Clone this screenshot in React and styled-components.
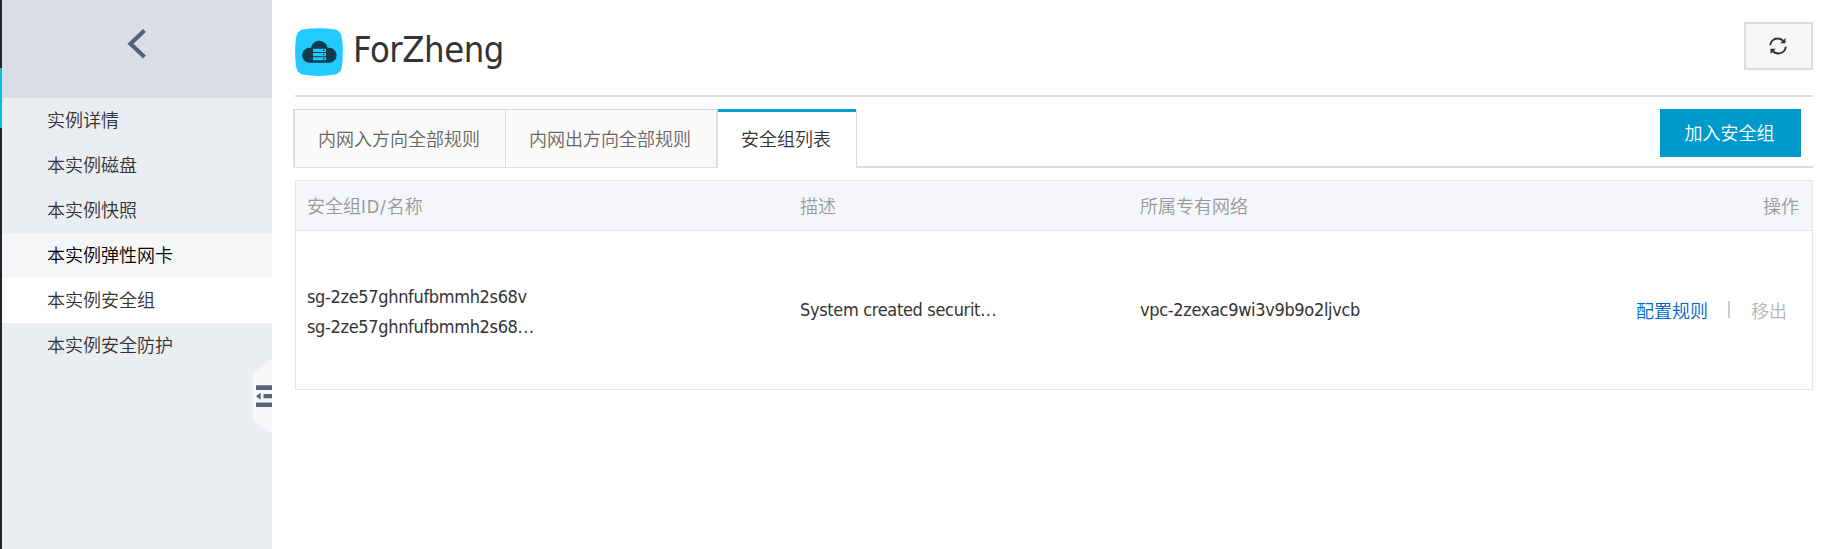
import React from "react";
import styled, { createGlobalStyle } from "styled-components";

const latin = `"DejaVu Sans Condensed", "DejaVu Sans", "Noto Sans CJK SC", sans-serif`;
const cjk = `"Noto Sans CJK SC", sans-serif`;

const GlobalStyle = createGlobalStyle`
  * { box-sizing: border-box; }
  body {
    margin: 0;
    background: #fff;
    color: #333;
    font-family: ${cjk};
    font-size: 18px;
    font-weight: 350;
    overflow: hidden;
  }
`;

const Page = styled.div`
  display: flex;
  height: 549px;
`;

const Rail = styled.div`
  width: 2px;
  padding-top: 68px;
  background: #20242d;
`;

const RailMarker = styled.div`
  height: 60px;
  background: #00c1de;
`;

const Sidebar = styled.aside`
  position: relative;
  width: 270px;
  background: #eaedf2;
`;

const BackBar = styled.div`
  display: flex;
  height: 98px;
  padding: 29px 0 0 125px;
  background: #d9dde4;
`;

const NavItem = styled.a`
  display: block;
  height: 45px;
  padding-left: 45px;
  line-height: 43px;
  color: ${(p) => (p.$hovered ? "#000" : "#333")};
  background: ${(p) => (p.$active ? "#fff" : p.$hovered ? "#f4f6f8" : "transparent")};
`;

const CollapseHandle = styled.div`
  position: absolute;
  right: 0;
  top: 359px;
  width: 19px;
  height: 75px;
  svg { display: block; }
`;

const Main = styled.main`
  flex: 1;
  padding: 0 15px 0 23px;
`;

const Header = styled.header`
  display: flex;
  align-items: flex-start;
  height: 97px;
  border-bottom: 2px solid #ddd;
`;

const Logo = styled.svg`
  margin-top: 28px;
`;

const Title = styled.h1`
  flex: 1;
  margin: 26px 0 0 10px;
  font: 400 36px/48px ${latin};
  font-stretch: condensed;
  letter-spacing: -0.4px;
`;

const RefreshButton = styled.button`
  display: flex;
  width: 69px;
  height: 48px;
  margin-top: 22px;
  padding: 13px 0 0 23px;
  border: 2px solid #ddd;
  background: #f7f7f7;
`;

const TabBar = styled.div`
  display: flex;
  height: 59px;
  margin: 12px 0 0 -2px;
`;

const Tab = styled.div`
  width: ${(p) => p.$width}px;
  height: 59px;
  padding-left: 23px;
  line-height: ${(p) => (p.$active ? 53 : 57)}px;
  color: ${(p) => (p.$active ? "#333" : "#666")};
  background: ${(p) => (p.$active ? "#fff" : "#fbfaf8")};
  border: 0 solid #ddd;
  border-top: ${(p) => (p.$active ? "3px solid #00a2ca" : "1px solid #ddd")};
  border-left-width: ${(p) => (p.$first ? 2 : 0)}px;
  border-right-width: ${(p) => p.$divider ?? 0}px;
  border-bottom-width: ${(p) => (p.$active ? 0 : 1)}px;
`;

const TabRest = styled.div`
  flex: 1;
  display: flex;
  justify-content: flex-end;
  padding-right: 12px;
  border-left: 1px solid #ddd;
  border-bottom: 2px solid #ddd;
`;

const JoinButton = styled.button`
  width: 141px;
  height: 48px;
  padding: 0 2px 2px 0;
  border: 0;
  background: #0099cc;
  color: #fff;
  font: 350 18px/46px ${cjk};
`;

const Table = styled.section`
  margin-top: 12px;
  height: 210px;
  border: 1px solid #e1e6eb;
`;

const Row = styled.div`
  display: grid;
  grid-template-columns: 493px 340px 1fr auto;
  align-items: center;
  padding: 0 12px 0 11px;
`;

const HeadRow = styled(Row)`
  height: 50px;
  padding-right: 13px;
  padding-bottom: 2px;
  border-bottom: 1px solid #e1e6eb;
  background: #f5f6fa;
  color: #999;
`;

const BodyRow = styled(Row)`
  height: 158px;
  padding-right: 25px;
`;

const Latin = styled.span`
  font-family: ${latin};
  font-stretch: condensed;
  font-weight: 400;
  letter-spacing: ${(p) => p.$tracking ?? -0.33}px;
`;

const Dots = styled.span`
  letter-spacing: 0.5px;
`;

const HeadCell = styled.div`
  height: 30px;
  line-height: 30px;
`;

const Cell = styled.div`
  line-height: 30px;
  padding-bottom: ${(p) => (p.$single ? 2 : 0)}px;
`;

const GroupId = styled.div`
  height: 30px;
`;

const Actions = styled.div`
  display: flex;
  align-items: center;
  line-height: 30px;
  padding-bottom: 1px;
`;

const ActionLink = styled.a`
  color: ${(p) => (p.$disabled ? "#b5b5b5" : "#0066cc")};
`;

const Separator = styled.span`
  width: 2px;
  height: 17px;
  margin: 0 21px 1px 20px;
  background: #ccc;
`;

const navItems = [
  { label: "实例详情" },
  { label: "本实例磁盘" },
  { label: "本实例快照" },
  { label: "本实例弹性网卡", hovered: true },
  { label: "本实例安全组", active: true },
  { label: "本实例安全防护" },
];

function CloudLogo() {
  return (
    <Logo width="48" height="48" viewBox="0 0 48 48">
      <path d="M9 1.2Q24-.9 39 1.2Q45.7 2.2 46.8 9Q49 24 46.8 39Q45.7 45.8 39 46.8Q24 49 9 46.8Q2.300 45.800 1.200 39Q-1 24 1.200 9Q2.300 2.200 9 1.200Z" fill="#23caff" />
      <path d="M14.500 34.700A7.400 7.400 0 0 1 14.500 19.800H16A8.400 8.400 0 0 1 32.600 19.800H34.200A7.400 7.400 0 0 1 34.200 34.700Z" fill="#0d3b4f" />
      <path d="M18 20.800h13v3.300H18zM18 25h13v3.300H18zM18 29.200h13v3H18z" fill="#23caff" />
      <path d="M28 21.500h1.400v1.400H28zM28 25.800h1.400v1.400H28zM28 30h1.400v1.400H28z" fill="#0d3b4f" />
    </Logo>
  );
}

function RefreshIcon() {
  return (
    <svg width="18" height="18" viewBox="0 0 18 18" fill="none" stroke="#333" strokeWidth="1.900">
      <path d="M1.200 8.200C1.500 4.200 4.700 1.500 8.600 1.500C11 1.500 13.200 2.600 14.500 4.300" />
      <path d="M16.800 9.800C16.500 13.800 13.300 16.500 9.400 16.500C7 16.500 4.800 15.400 3.500 13.700" />
      <path d="M16.500 1V6.200H11.200ZM1.500 17V11.800H6.800Z" fill="#333" stroke="none" />
    </svg>
  );
}

export default function App() {
  return (
    <>
      <GlobalStyle />
      <Page>
        <Rail>
          <RailMarker />
        </Rail>
        <Sidebar>
          <BackBar>
            <svg width="20" height="30" viewBox="0 0 20 30">
              <path d="M17.500 1.500L3.500 14.800L17.500 28" fill="none" stroke="#546478" strokeWidth="4.200" />
            </svg>
          </BackBar>
          <nav>
            {navItems.map((item) => (
              <NavItem key={item.label} $active={item.active} $hovered={item.hovered}>
                {item.label}
              </NavItem>
            ))}
          </nav>
          <CollapseHandle>
            <svg width="19" height="75" viewBox="0 0 19 75">
              <path d="M19 0L0 14V61L19 75Z" fill="#f7f7f7" />
              <path d="M3 26.300H19V31H3ZM10.500 35H19V39.300H10.500ZM3 43.500H19V48H3ZM3 37.200L7.700 33.700V40.700Z" fill="#546478" />
            </svg>
          </CollapseHandle>
        </Sidebar>
        <Main>
          <Header>
            <CloudLogo />
            <Title>ForZheng</Title>
            <RefreshButton aria-label="刷新">
              <RefreshIcon />
            </RefreshButton>
          </Header>
          <TabBar>
            <Tab $width={213} $first $divider={1}>内网入方向全部规则</Tab>
            <Tab $width={212} $divider={2}>内网出方向全部规则</Tab>
            <Tab $width={138} $active>安全组列表</Tab>
            <TabRest>
              <JoinButton>加入安全组</JoinButton>
            </TabRest>
          </TabBar>
          <Table>
            <HeadRow>
              <HeadCell>安全组<Latin $tracking={1}>ID/</Latin>名称</HeadCell>
              <HeadCell>描述</HeadCell>
              <HeadCell>所属专有网络</HeadCell>
              <HeadCell>操作</HeadCell>
            </HeadRow>
            <BodyRow>
              <Cell>
                <GroupId><Latin>sg-2ze57ghnfufbmmh2s68v</Latin></GroupId>
                <GroupId><Latin>sg-2ze57ghnfufbmmh2s68<Dots>...</Dots></Latin></GroupId>
              </Cell>
              <Cell $single><Latin>System created securit<Dots>...</Dots></Latin></Cell>
              <Cell $single><Latin>vpc-2zexac9wi3v9b9o2ljvcb</Latin></Cell>
              <Actions>
                <ActionLink>配置规则</ActionLink>
                <Separator />
                <ActionLink $disabled>移出</ActionLink>
              </Actions>
            </BodyRow>
          </Table>
        </Main>
      </Page>
    </>
  );
}
